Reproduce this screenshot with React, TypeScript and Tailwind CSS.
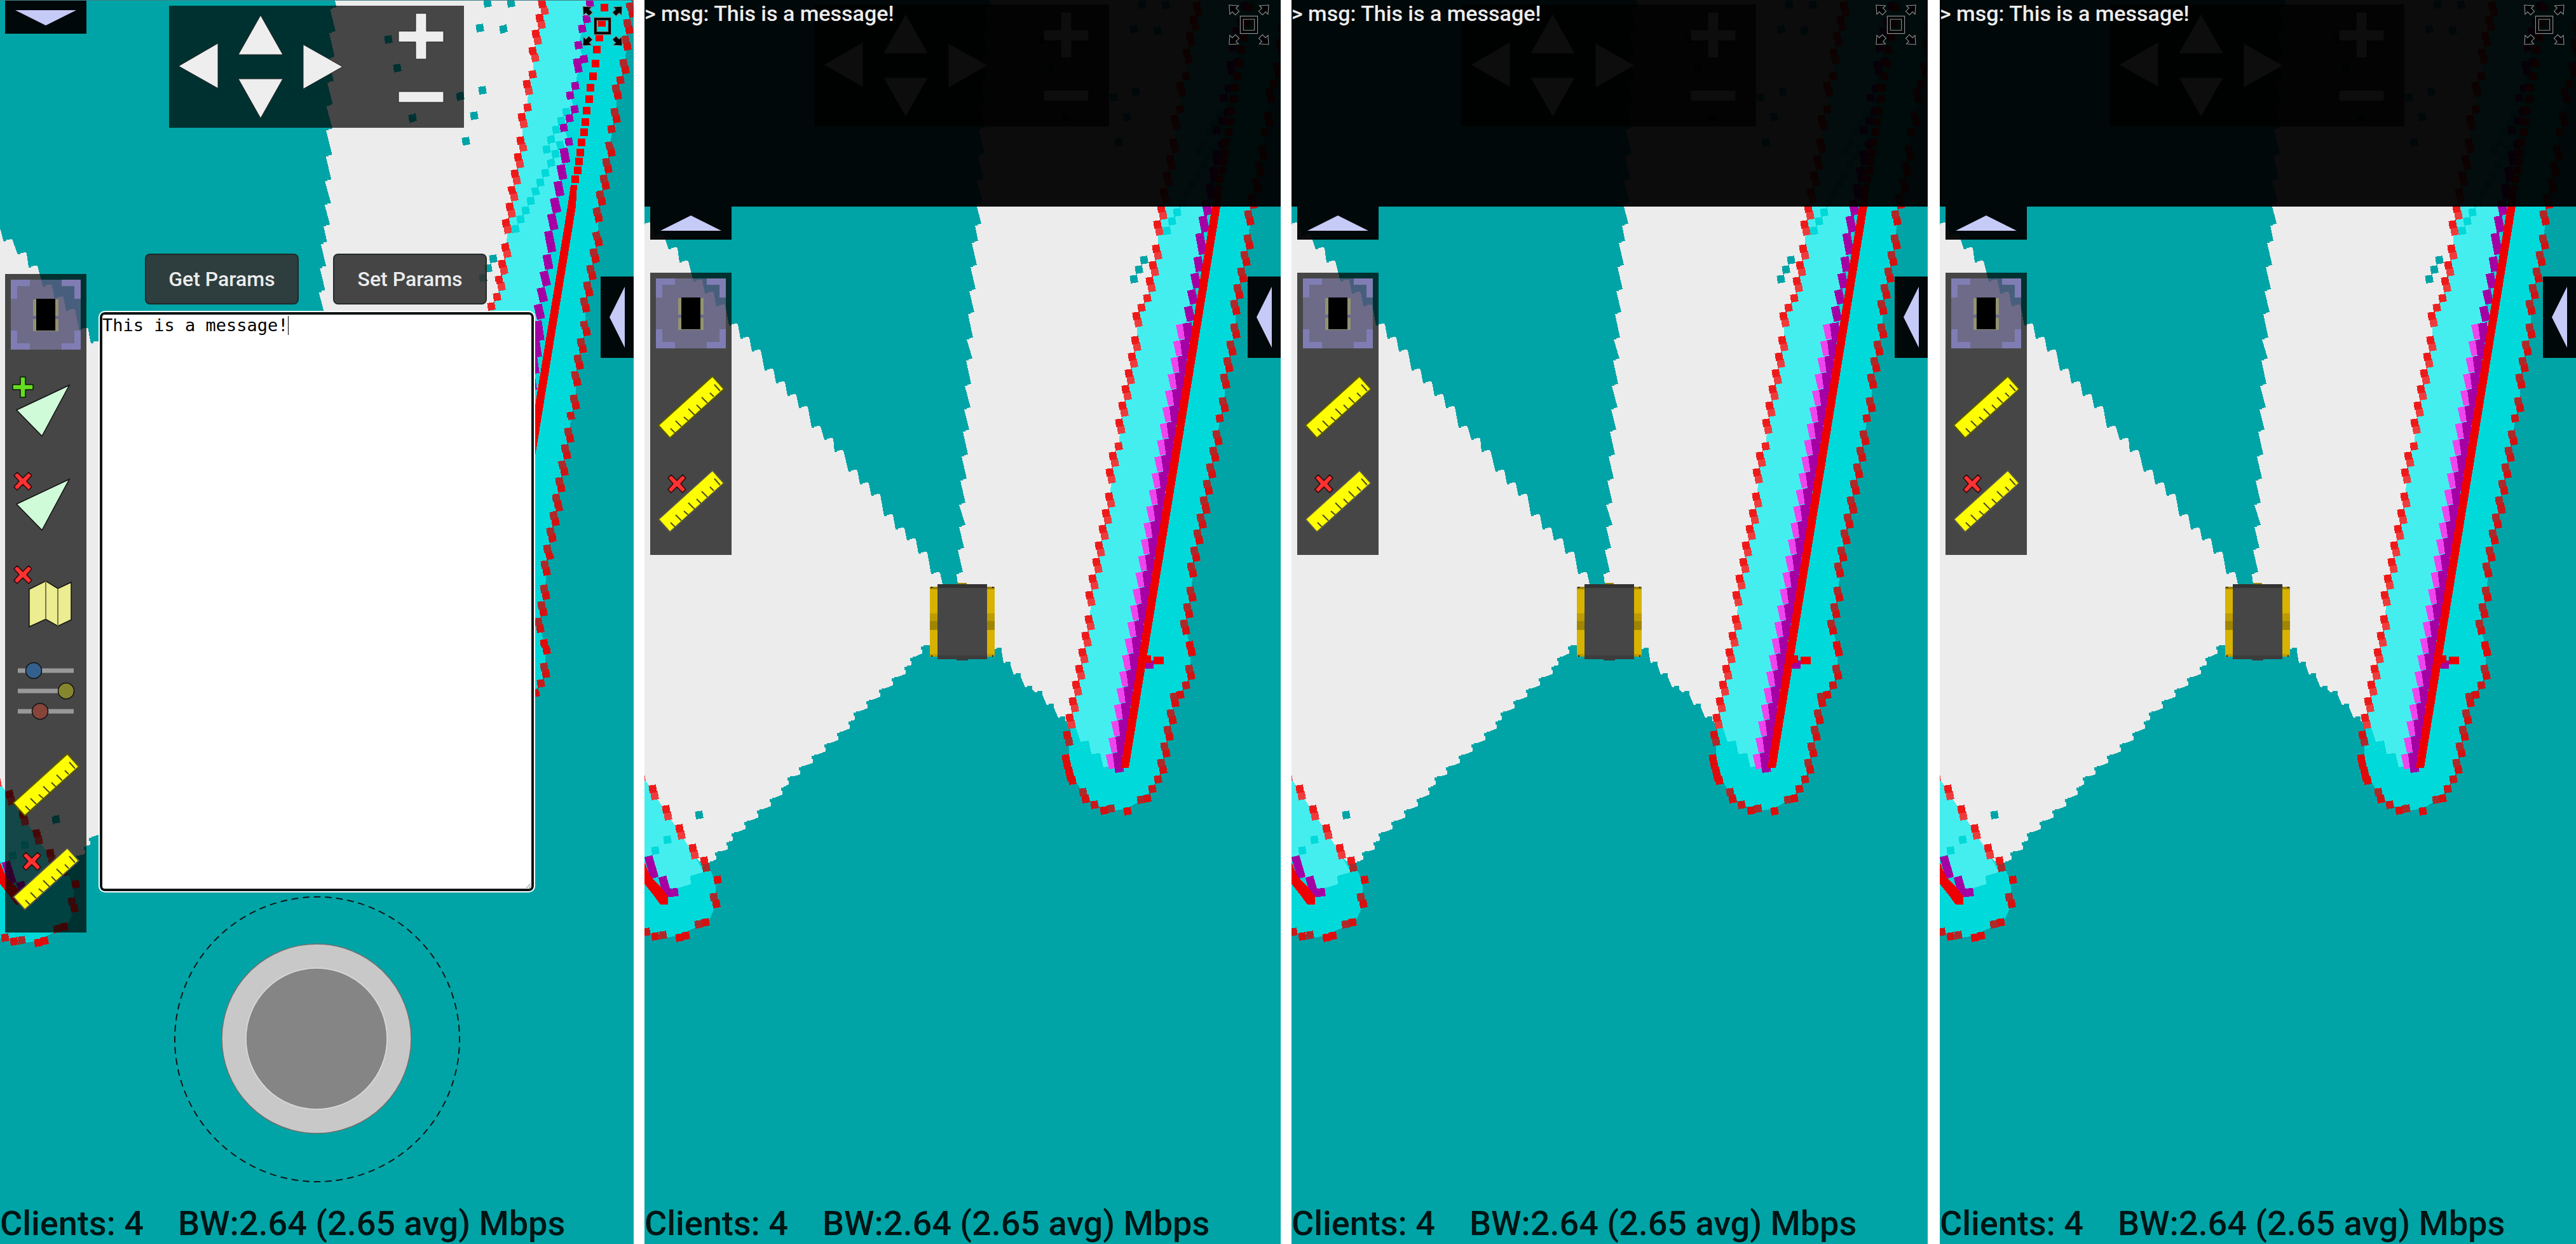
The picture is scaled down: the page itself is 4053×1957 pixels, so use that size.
import React from "react";

type Pt = [number, number];

const TEAL = "#00a4a6";
const FREE = "#ececec";
const GLOW = "#45eeee";
const CYAN = "#00d9d9";
const SCAN = "#ee0000";
const PURPLE = "#a400a4";
const PINK = "#ee45ee";

/* ------------------------------------------------------------------ */
/* ------------------------------------------------------------------ */

const tile = (ox: number, oy: number, pts: Pt[]): Pt[] =>
  pts.map(([x, y]) => [Math.round(ox + x / 3), Math.round(oy + y / 3)]);

const topTile = (pts: Pt[]): Pt[] =>
  pts.map(([x, y]) => {
    const px = 740 + x / 3;
    const py = y / 3;
    return [
      Math.round(px + 2.5 + 0.014 * (980 - py)),
      Math.round(py - 2 + 0.014 * (px - 480)),
    ];
  });

const midTile = (pts: Pt[]) => tile(626, 310, pts);
const lowTile = (pts: Pt[]) => tile(536, 800, pts);
const cornerTile = (pts: Pt[]) => tile(-14, 1150, pts);

const leftPairs: Pt[] = [
  ...topTile([[353, -60], [340, 18], [325, 85], [308, 160], [295, 240], [267, 395], [240, 552], [237, 663], [222, 742], [210, 820], [195, 898]]),
  ...midTile([[560, 55], [543, 130], [538, 242], [522, 320], [508, 397], [444, 562], [438, 675], [423, 753], [408, 830], [393, 907], [378, 985], [363, 1065], [333, 1222], [318, 1298], [315, 1412]]),
  ...lowTile([[570, 20], [555, 97], [538, 175], [525, 252], [508, 330], [493, 408], [490, 522], [473, 600], [460, 677], [443, 755], [428, 832], [413, 910], [400, 988]]),
];
const leftSingles: Pt[] = [
  ...topTile([[292, 351], [267, 507]]),
  ...midTile([[494, 476], [468, 521], [360, 1177]]),
];
const rightPairs: Pt[] = [
  ...topTile([[765, -50], [752, 30], [740, 107], [730, 185], [720, 297], [685, 418], [680, 530], [653, 688], [640, 765], [628, 843], [610, 920]]),
  ...midTile([[973, 82], [968, 195], [953, 272], [938, 350], [922, 428], [907, 505], [905, 615], [888, 697], [873, 775], [858, 852], [853, 963], [823, 1118], [808, 1197], [793, 1275], [778, 1352], [763, 1430]]),
  ...lowTile([[1018, 42], [1003, 118], [988, 197], [973, 273], [970, 387], [953, 465], [940, 543], [963, 755], [875, 967], [860, 1043], [845, 1122], [830, 1200]]),
];
const rightSingles: Pt[] = [
  ...topTile([[707, 377], [665, 611]]),
  ...midTile([[838, 1043]]),
  ...lowTile([[1045, 5], [947, 835], [816, 1278], [790, 1322], [515, 1398]]),
];
const brightBlobs = [
  ...lowTile([[965, 645], [975, 677], [672, 1428], [380, 1180], [388, 1210], [395, 1240], [403, 1265], [410, 1285]]),
  ...cornerTile([[387, 703], [207, 975], [238, 965]]),
];
const redBlobs = [
  ...lowTile([[922, 880], [898, 918], [765, 1367], [560, 1424], [473, 1372], [387, 1068]]),
  ...cornerTile([[382, 815], [330, 903], [92, 970]]),
];
const brownBlobs = [
  ...lowTile([[890, 887], [735, 1375], [595, 1415], [463, 1338], [397, 1100]]),
  ...cornerTile([[370, 783], [298, 912], [128, 962], [333, 645]]),
];
const cornerPairs = cornerTile([[18, 185], [80, 273], [145, 368], [207, 460], [270, 553]]);
const unknownBlobs: Pt[] = [
  ...topTile([[80, 15], [192, 15], [42, 132], [153, 137], [55, 425], [15, 547], [-20, 667], [-387, 186], [-348, 321], [-48, 456], [-276, 558]]),
  ...midTile([[480, 297], [456, 342], [432, 387]]),
  ...cornerTile([[300, 396]]),
];
const cyanBlobs = [
  ...topTile([[452, 528], [428, 570], [404, 613], [380, 658], [358, 704], [422, 684], [400, 728], [378, 771], [353, 815], [330, 860], [306, 904], [284, 947], [260, 992], [236, 1035], [212, 1080]]),
  ...cornerTile([[150, 512], [92, 565]]),
];
const purpleTop = topTile([[563, 15], [548, 90], [525, 135], [510, 213], [535, 280], [500, 293], [508, 325], [495, 404], [470, 450], [490, 516], [465, 560], [440, 604], [465, 671]]);

const purpleBars: [Pt, Pt][] = (
  [
    ...([[[438, 700], [450, 768]], [[424, 778], [438, 846]], [[409, 856], [423, 924]], [[394, 935], [410, 1002]]] as [Pt, Pt][]).map((b) => topTile(b)),
    ...([[[770, 20], [784, 80]], [[756, 90], [770, 165]], [[740, 170], [760, 270]], [[733, 282], [745, 350]], [[717, 360], [731, 428]], [[703, 438], [717, 505]], [[688, 516], [702, 585]]] as [Pt, Pt][]).map((b) => midTile(b)),
    ...([[[60, 592], [90, 692]], [[126, 686], [152, 782]], [[155, 765], [200, 760]]] as [Pt, Pt][]).map((b) => cornerTile(b)),
    ...([[[755, 735], [794, 735]]] as [Pt, Pt][]).map((b) => lowTile(b)),
  ] as [Pt, Pt][]
);

const scanX = (y: number) => 899 - (y - 325) * 0.163;
const teeth = Array.from({ length: 27 }, (_, i) => 510 + i * 26);

const scanDots: Pt[] = tile(741, -1, [[630, 38], [617, 112], [605, 180], [593, 237], [588, 303], [576, 363], [564, 417], [558, 471], [546, 525], [540, 579], [534, 627], [522, 675], [516, 723], [510, 765], [504, 807], [492, 849]]);

/* Boundaries of the unknown wedge above the robot */
const wedgeLeft: Pt[] = (
  [[-10, 75], [30, 118], [78, 160], [135, 207], [181, 252], [238, 320], [285, 363], [332, 408], [385, 475], [431, 521], [478, 566], [531, 633], [578, 678], [625, 723], [672, 767], [725, 835], [776, 879], [818, 921], [876, 991], [923, 1035], [970, 1076], [1022, 1147], [1070, 1193], [1116, 1233], [1163, 1278], [1215, 1351]] as Pt[]
).flatMap(([x, y]): Pt[] => {
  const px = Math.round(x / 2.613 - 14);
  const py = Math.round(300 + y / 2.24);
  return [[px, py], [px + 4, py], [px + 4, py - 2], [px + 12, py - 3], [px + 14, py - 2]];
});

const wedgeRight: Pt[] = (
  [[547, -30], [545, 10], [543, 48], [541, 88], [539, 126], [537, 163], [536, 201], [535, 242], [533, 281], [532, 318], [530, 352], [525, 379], [523, 417], [521, 455], [519, 491], [517, 531], [516, 564], [514, 604], [513, 641], [511, 676], [509, 715], [507, 753], [505, 791], [505, 826], [503, 862], [501, 900]] as Pt[]
).flatMap(([x, y]): Pt[] => [[x, y], [x - 6, y + 1], [x - 6, y + 3], [x - 10, y + 3]]);

const lowerLeft: Pt[] = (
  [[435, 1017], [418, 1035], [409, 1049], [389, 1067], [369, 1085], [349, 1103], [329, 1121], [321, 1135], [303, 1153], [283, 1171], [263, 1189], [243, 1207], [225, 1223], [215, 1239], [197, 1257], [177, 1275], [157, 1293], [137, 1311], [129, 1325], [111, 1341], [99, 1357]] as Pt[]
).flatMap(([x, y]): Pt[] => [[x + 8, y - 2], [x + 4, y - 2], [x + 4, y], [x, y], [x, y + 5], [x + 2, y + 5], [x + 2, y + 11], [x - 3, y + 13]]);

const lowerRight: Pt[] = (
  [[551, 1021], [565, 1043], [581, 1061], [599, 1081], [615, 1089], [633, 1109], [651, 1129]] as Pt[]
).flatMap(([x, y]): Pt[] => [[x, y], [x + 3, y], [x + 3, y - 2], [x + 11, y - 2], [x + 11, y + 4]]);

const byY = (a: Pt, b: Pt) => a[1] - b[1];
const leftEdge = [...leftPairs.map(([x, y]): Pt => [x + 2, y + 5]), ...leftSingles].sort(byY);
const rightEdge = [...rightPairs.map(([x, y]): Pt => [x + 2, y + 5]), ...rightSingles.filter((p) => p[1] < 1230), ...lowTile([[970, 660], [900, 890]])].sort(byY);

const str = (pts: Pt[]) => pts.map((p) => p.join(",")).join(" ");

const leftFree = str([[-40, 300], ...wedgeLeft, [469, 919], [480, 980], [449, 1015], ...lowerLeft, [90, 1362], [-40, 1200]]);
const midFree = str([...wedgeRight, [493, 919], [500, 980], ...lowerRight, [668, 1140], ...[...leftEdge].reverse()]);
const wallCyan = str([
  ...leftEdge,
  ...lowTile([[395, 1100], [400, 1240], [430, 1290], [463, 1345], [515, 1398], [580, 1418], [615, 1425], [672, 1415], [735, 1378], [790, 1322], [816, 1278]]),
  ...[...rightEdge].reverse(),
]);
const wallGlow = str([
  ...leftEdge,
  ...lowTile([[430, 1036], [450, 1100], [490, 1096], [500, 1158], [543, 1156], [557, 1220], [590, 1214], [600, 1160]]),
  [scanX(520) - 12, 520],
  ...midTile([[703, 500], [733, 350], [770, 100]]),
  ...[...purpleTop].reverse(),
  [945, -40],
]);
const cornerCyan = str(cornerTile([[-60, 70], [42, 225], [100, 315], [160, 405], [225, 505], [285, 600], [350, 655], [378, 710], [382, 815], [350, 885], [290, 925], [200, 965], [150, 975], [90, 965], [-60, 930]]));
const cornerGlow = str(cornerTile([[-60, 70], [42, 225], [100, 315], [160, 405], [225, 505], [285, 600], [320, 665], [258, 685], [260, 722], [190, 745], [155, 740], [130, 690], [90, 690], [60, 590], [-60, 590]]));

const BLOB = "M-7-5h3v-1h7v-1h2v4h1v6h1v2h-3v1h-6v1h-3v-4h-1v-7h-1z";

function Blobs({ at, fill, dx = 0, dy = 0 }: { at: Pt[]; fill: string; dx?: number; dy?: number }) {
  return (
    <g fill={fill}>
      {at.map(([x, y], i) => (
        <path key={i} d={BLOB} transform={`translate(${x + dx} ${y + dy})`} />
      ))}
    </g>
  );
}

function MapView({ tilted }: { tilted: boolean }) {
  return (
    <svg className="absolute inset-0 h-full w-full" shapeRendering="crispEdges" role="img" aria-label="Robot map">
      <rect width="100%" height="100%" fill={TEAL} />
      <g transform={tilted ? "translate(-2 2) rotate(-0.8 480 980)" : undefined}>
        <polygon points={leftFree} fill={FREE} />
        <polygon points={midFree} fill={FREE} />
        <Blobs at={unknownBlobs} fill={TEAL} />
        <polygon points={wallCyan} fill={CYAN} />
        <polygon points={wallGlow} fill={GLOW} />
        <polygon points={cornerCyan} fill={CYAN} />
        <polygon points={cornerGlow} fill={GLOW} />
        <Blobs at={cyanBlobs} fill={CYAN} />

        <Blobs at={leftPairs} fill="#ee3c3c" dx={3} dy={11} />
        <Blobs at={leftPairs} fill="#ee1a1a" />
        <Blobs at={leftSingles} fill="#ee2424" />
        <Blobs at={rightPairs} fill="#d41212" dx={3} dy={11} />
        <Blobs at={rightPairs} fill="#ae2a2a" />
        <Blobs at={rightSingles} fill="#c81a1a" />
        <Blobs at={cornerPairs} fill="#ee3c3c" dx={3} dy={11} />
        <Blobs at={cornerPairs} fill="#ee1a1a" />
        <Blobs at={cornerTile([[325, 612]])} fill="#ee1a1a" />
        <Blobs at={cornerTile([[52, 947]])} fill="#c81a1a" />
        <Blobs at={brownBlobs} fill="#ae2a2a" />
        <Blobs at={redBlobs} fill="#d41212" />
        <Blobs at={brightBlobs} fill="#e00c0c" />

        <Blobs at={purpleTop} fill={PURPLE} />
        <g strokeWidth={13} stroke={PURPLE}>
          {purpleBars.map(([a, b], i) => (
            <line key={i} x1={a[0]} y1={a[1]} x2={b[0]} y2={b[1]} />
          ))}
        </g>
        <g strokeWidth={14}>
          {teeth.map((y) => (
            <React.Fragment key={y}>
              <line x1={scanX(y) - 26} y1={y} x2={scanX(y) - 21} y2={y + 23} stroke={PINK} />
              <line x1={scanX(y) - 15} y1={y - 2} x2={scanX(y) - 11} y2={y + 29} stroke={PURPLE} />
            </React.Fragment>
          ))}
        </g>
      </g>
      <g fill={SCAN}>
        {scanDots.map(([x, y]) => (
          <rect key={y} x={x - 6} y={y - 6} width={12} height={12} />
        ))}
        <polygon points="898,291 908,291 906,325 762,1208 749,1208 893,325" />
        <rect x={785} y={1031} width={12} height={12} />
        <rect x={801} y={1033} width={16} height={12} />
        <polygon points="-2,1352 10,1380 26,1396 37,1410 37,1423 25,1423 14,1408 -2,1388" />
      </g>
      <g>
        <rect x={493} y={917} width={14} height={3} fill="#a08500" />
        <rect x={449} y={923} width={102} height={110} fill="#d8b200" />
        <rect x={449} y={923} width={102} height={4} fill="#a08500" />
        <rect x={449} y={965} width={102} height={12} fill="#bc9c00" />
        <rect x={449} y={977} width={102} height={14} fill="#a08500" />
        <rect x={449} y={1029} width={102} height={4} fill="#bc9c00" />
        <path d="M451 923h2v2h-2zM547 923h2v2h-2zM451 1031h2v2h-2zM547 1031h2v2h-2z" fill="#111" />
        <rect x={461} y={919} width={78} height={118} fill="#464646" />
        <rect x={461} y={919} width={78} height={6} fill="#333" />
        <rect x={461} y={1031} width={78} height={6} fill="#3c3c3c" />
        <rect x={491} y={1037} width={18} height={2} fill="#3c3c3c" />
      </g>
    </svg>
  );
}

/* ------------------------------ icons ------------------------------ */

const iconBox = "block h-[148px] w-[128px]";

function FollowIcon() {
  return (
    <svg className={iconBox} viewBox="0 0 128 148" shapeRendering="crispEdges">
      <rect x={9} y={9} width={110} height={110} fill="rgb(157 152 217 / 0.45)" />
      <path d="M9 9h30v10H19v20H9zM119 9H89v10h20v20h10zM9 119h30v-10H19V89H9zM119 119H89v-10h20V89h10z" fill="#7f7db3" />
      <path d="M44 40h40v26H44zM44 71h40v19H44z" fill="#929370" />
      <rect x={49} y={39} width={30} height={50} fill="#000" />
    </svg>
  );
}

function Cross({ x, y }: { x: number; y: number }) {
  return (
    <path
      d="M-9-14L0-5L9-14L14-9L6 0L14 9L9 14L0 5L-9 14L-14 9L-6 0L-14-9Z"
      transform={`translate(${x} ${y})`}
      fill="#ff3232"
      stroke="#2a0808"
      strokeWidth={1.5}
      strokeLinejoin="round"
    />
  );
}

function WaypointIcon({ mode }: { mode: "add" | "remove" }) {
  return (
    <svg className={iconBox} viewBox="0 0 128 148">
      <path d="M18 66L101 27L58 107Z" fill="#d0fbd8" stroke="#111" strokeWidth={1.5} />
      {mode === "add" ? (
        <path d="M24 14h8v12h12v8H32v12h-8V34H12v-8h12z" fill="#66dd22" stroke="#0a1a00" strokeWidth={1.5} strokeLinejoin="round" />
      ) : (
        <Cross x={28} y={30} />
      )}
    </svg>
  );
}

function ClearMapIcon() {
  return (
    <svg className={iconBox} viewBox="0 0 128 148">
      <path d="M38 52L64 39L83 51L104 41V100L83 110L64 99L38 111Z" fill="#ecec90" stroke="#111" strokeWidth={1.5} />
      <path d="M64 39V99M83 51V110" stroke="#77774c" strokeWidth={2} />
      <Cross x={28} y={29} />
    </svg>
  );
}

function SlidersIcon() {
  return (
    <svg className={iconBox} viewBox="0 0 128 148">
      <path d="M20 32H108M20 64H108M20 96H108" stroke="#999" strokeWidth={7} />
      <g stroke="#111" strokeWidth={1.5}>
        <circle cx={45} cy={32} r={12.5} fill="#33608c" />
        <circle cx={96} cy={64} r={12.5} fill="#86862f" />
        <circle cx={55} cy={96} r={12.5} fill="#86443a" />
      </g>
    </svg>
  );
}

function RulerIcon({ clear = false }: { clear?: boolean }) {
  return (
    <svg className={iconBox} viewBox="0 0 128 148">
      <path d="M13 92L98 15L116 35L31 112Z" fill="#ffff00" stroke={clear ? "#55554a" : "#5a5a00"} strokeWidth={2} />
      <path
        d="M32 97L39 104M40 85L49 94M53 79L60 85M60 66L70 76M73 60L80 67M81 48L90 57M94 41L100 47M101 28L110 38"
        stroke="#4a4a20"
        strokeWidth={2}
      />
      {clear && <Cross x={42} y={36} />}
    </svg>
  );
}

function FullscreenIcon() {
  const arrow = "M0 0L15 1L11 5L16 10L10 16L5 11L1 15Z";
  return (
    <svg className="block h-16 w-16" viewBox="-1 -1 66 66">
      <g stroke="#8c8c8c" strokeWidth={1.2}>
        <path d={arrow} />
        <path d={arrow} transform="translate(64 0) scale(-1 1)" />
        <path d={arrow} transform="translate(0 64) scale(1 -1)" />
        <path d={arrow} transform="translate(64 64) scale(-1 -1)" />
        <path fillRule="evenodd" d="M18 18h28v28H18zM23 23v18h18V23z" />
      </g>
    </svg>
  );
}

/* ------------------------------ pieces ----------------------------- */

function DriveControls() {
  return (
    <svg className="block h-[192px] w-[464px] bg-black/70" viewBox="0 0 464 192" role="img" aria-label="Pan and zoom">
      <g fill="#eeeeee" stroke="#222" strokeWidth={1}>
        <path d="M144 15L109 77H179Z" />
        <path d="M15 95L77 59V130Z" />
        <path d="M273 96L211 61V131Z" />
        <path d="M144 177L109 115H179Z" />
        <path d="M388 12h17v28h27v17h-27v27h-17V57h-27V40h27z" />
        <path d="M361 135h71v17h-71z" />
      </g>
    </svg>
  );
}

function Tool({ label, children }: { label: string; children: React.ReactNode }) {
  return (
    <button type="button" aria-label={label} className="block">
      {children}
    </button>
  );
}

function Joystick() {
  return (
    <svg className="block h-[452px] w-[452px]" viewBox="-226 -226 452 452" role="img" aria-label="Joystick">
      <circle r={224} fill="none" stroke="#141414" strokeWidth={2} pathLength={1600} strokeDasharray="12 8" strokeDashoffset={6} />
      <circle cx={-1} cy={-1} r={149} fill="#c8c8c8" stroke="#6f6f6f" strokeWidth={1.5} />
      <circle cx={-1} cy={-1} r={111} fill="#858585" stroke="#dcdcdc" strokeWidth={1.5} />
    </svg>
  );
}

function Status() {
  return (
    <footer className="absolute bottom-0 left-0 flex gap-[54px] whitespace-nowrap text-[54px] leading-[64px] font-medium text-[#001414]">
      <span>Clients: 4</span>
      <span>BW:2.64 (2.65 avg) Mbps</span>
    </footer>
  );
}

function SideTab() {
  return (
    <button type="button" aria-label="Open side panel" className="absolute top-[435px] right-0 bg-black/95">
      <svg className="block h-[128px] w-[52px]" viewBox="0 0 52 128">
        <path d="M38 16V112L14 64Z" fill="#c6caf7" />
      </svg>
    </button>
  );
}

function ConsoleTab({ open }: { open: boolean }) {
  return (
    <button type="button" aria-label={open ? "Close console" : "Open console"} className="block w-[128px] bg-black/95">
      <svg className="block h-[52px] w-[128px]" viewBox="0 0 128 52">
        <path d={open ? "M16 38H112L64 14Z" : "M16 15H112L64 39Z"} fill="#c6caf7" />
      </svg>
    </button>
  );
}

function EditorPanel() {
  const btn =
    "h-[80px] w-[242px] rounded-lg border-2 border-[#1c2424]/80 bg-[#333333]/90 text-[32px] font-medium text-[#ececec]";
  return (
    <section className="relative h-full flex-[997] overflow-hidden bg-[#00a4a6]">
      <MapView tilted />
      <div className="absolute top-0 right-0 left-0 h-px bg-[#3f8088]" />
      <div className="absolute top-[9px] left-[266px]">
        <DriveControls />
      </div>
      <button type="button" aria-label="Fullscreen" className="absolute top-[9px] right-[17px]">
        <FullscreenIcon />
      </button>
      <div className="absolute top-px left-[8px] flex flex-col gap-[378px]">
        <ConsoleTab open={false} />
        <nav className="flex w-[128px] flex-col bg-black/70">
          <Tool label="Follow robot"><FollowIcon /></Tool>
          <Tool label="Add waypoint"><WaypointIcon mode="add" /></Tool>
          <Tool label="Remove waypoint"><WaypointIcon mode="remove" /></Tool>
          <Tool label="Clear map"><ClearMapIcon /></Tool>
          <Tool label="Settings"><SlidersIcon /></Tool>
          <Tool label="Measure"><RulerIcon /></Tool>
          <Tool label="Clear measurement"><RulerIcon clear /></Tool>
        </nav>
      </div>
      <SideTab />
      <div className="absolute top-[399px] right-[155px] left-[155px] flex flex-col">
        <div className="flex gap-[54px] pl-[73px]">
          <button type="button" className={btn}>Get Params</button>
          <button type="button" className={btn}>Set Params</button>
        </div>
        <div className="relative mx-[2px] mt-[12px]">
          <textarea
            aria-label="Parameters"
            defaultValue="This is a message!"
            className="block h-[911px] w-full rounded-lg border-4 border-[#101414] bg-white px-0 py-px font-['DejaVu_Sans_Mono',monospace] text-[27px] leading-[32px] text-black outline-2 outline-white"
          />
          <span className="absolute top-[6px] left-[296px] h-[30px] w-px bg-black" />
        </div>
        <div className="mt-[7px] self-center">
          <Joystick />
        </div>
      </div>
      <Status />
    </section>
  );
}

function ConsolePanel() {
  return (
    <>
      <MapView tilted={false} />
      <div className="absolute top-[7px] left-[267px]">
        <DriveControls />
      </div>
      <div className="relative h-[325px] bg-black/95">
        <p className="text-[34px] leading-[42px] font-medium whitespace-nowrap text-[#ececec]">&gt; msg: This is a message!</p>
        <button type="button" aria-label="Fullscreen" className="absolute top-[7px] right-[18px]">
          <FullscreenIcon />
        </button>
      </div>
      <div className="relative flex flex-col items-start gap-[52px] pl-[9px]">
        <ConsoleTab open />
        <nav className="flex w-[128px] flex-col bg-black/70">
          <Tool label="Follow robot"><FollowIcon /></Tool>
          <Tool label="Measure"><RulerIcon /></Tool>
          <Tool label="Clear measurement"><RulerIcon clear /></Tool>
        </nav>
      </div>
      <SideTab />
      <Status />
    </>
  );
}

export default function App() {
  const panel = "relative h-full flex-[1001] overflow-hidden bg-[#00a4a6]";
  return (
    <main className="flex h-screen w-full bg-white font-['Roboto',sans-serif]">
      <EditorPanel />
      <section className={`${panel} ml-[17px]`}><ConsolePanel /></section>
      <section className={`${panel} ml-[17px]`}><ConsolePanel /></section>
      <section className={`${panel} ml-[19px]`}><ConsolePanel /></section>
    </main>
  );
}
